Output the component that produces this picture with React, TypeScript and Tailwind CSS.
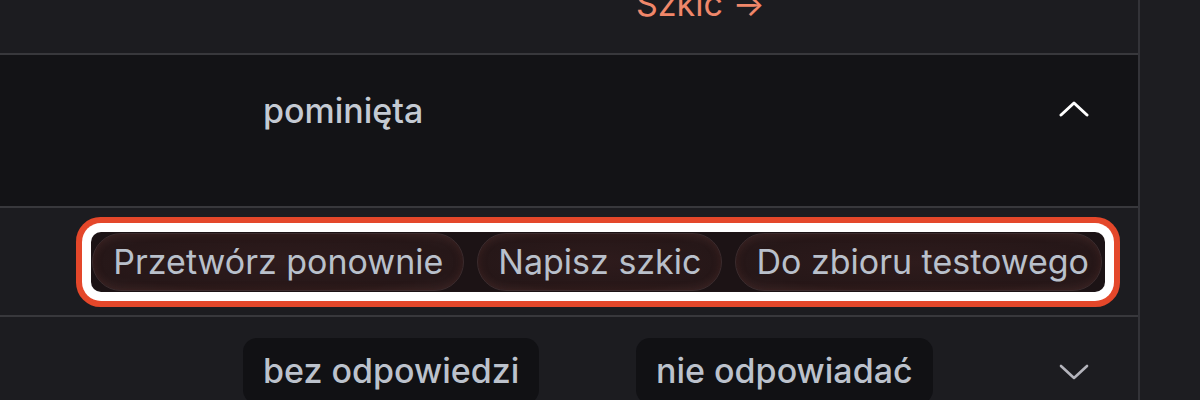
const font = { fontFamily: "Inter, 'Noto Sans', sans-serif" };

function Chevron({ up, className }: { up?: boolean; className?: string }) {
  return (
    <svg width="30" height="16" viewBox="0 0 30 16" fill="none" className={className}>
      <polyline
        points={up ? "2,14 15,2 28,14" : "2,2 15,14 28,2"}
        stroke="currentColor"
        strokeWidth={up ? 3 : 2.6}
        strokeLinecap="round"
        strokeLinejoin="round"
      />
    </svg>
  );
}

function ActionPill({ label, last }: { label: string; last?: boolean }) {
  return (
    <button
      className={`flex h-[58px] items-center rounded-full border border-[#3b2b2d] bg-[radial-gradient(ellipse_at_center,#2e1b1c_0%,#261718_70%,#2f1f20_100%)] pl-5 text-[34px] leading-none text-[#b9c0cb] shadow-[inset_0_0_8px_rgba(120,60,50,0.25)] ${last ? "pr-3" : "pr-5"}`}
    >
      {label}
    </button>
  );
}

function Tag({ label }: { label: string }) {
  return (
    <span className="flex h-[66px] items-center rounded-[14px] bg-[#111114] px-5 text-[34px] font-medium leading-none text-[#bcc2cc]">
      {label}
    </span>
  );
}

export default function App() {
  return (
    <div className="flex h-[400px] w-[1200px] overflow-hidden bg-[#1d1d21]" style={font}>
      <div className="flex w-[1140px] flex-col border-r-2 border-[#333338]">
        {/* previous row, cut at top */}
        <div className="flex h-[55px] shrink-0 items-start border-b-2 border-[#38383c] bg-[#1c1c20]">
          <span className="ml-[636px] mt-[-16px] text-[34px] leading-[40px] text-[#f0876a]">
            Szkic →
          </span>
        </div>

        {/* expanded row */}
        <div className="flex h-[153px] shrink-0 items-start border-b-2 border-[#38383c] bg-[#131316] pt-[36px]">
          <span className="ml-[263px] text-[34px] font-medium leading-[40px] text-[#c4cad3]">
            pominięta
          </span>
          <Chevron up className="ml-auto mr-[49px] mt-[10px] text-white" />
        </div>

        {/* actions */}
        <div className="flex h-[109px] shrink-0 items-center justify-end border-b-2 border-[#38383c] bg-[#1c1c20] pr-[33px]">
          <div className="flex items-center gap-[13px] rounded-[10px] bg-[#1c1315] py-px pl-px pr-[3px] shadow-[0_0_0_9px_#ffffff,0_0_0_15px_#e4472a]">
            <ActionPill label="Przetwórz ponownie" />
            <ActionPill label="Napisz szkic" />
            <ActionPill label="Do zbioru testowego" last />
          </div>
        </div>

        {/* next row */}
        <div className="flex flex-1 items-start bg-[#1c1c20] pt-[21px]">
          <div className="ml-[243px] w-[393px]">
            <div className="inline-flex">
              <Tag label="bez odpowiedzi" />
            </div>
          </div>
          <Tag label="nie odpowiadać" />
          <Chevron className="ml-auto mr-[49px] mt-[26px] text-[#b4b4bc]" />
        </div>
      </div>
      <div className="flex-1" />
    </div>
  );
}
